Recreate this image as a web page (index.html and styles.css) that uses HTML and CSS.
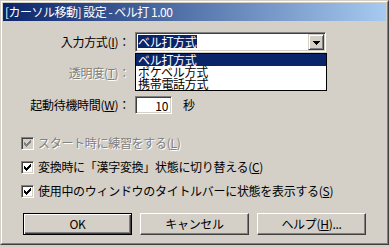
FILE: index.html
```html
<!DOCTYPE html>
<html lang="ja">
<head>
<meta charset="utf-8">
<title>設定</title>
<link rel="stylesheet" href="styles.css">
</head>
<body>
<div class="window">
  <div class="frame">
    <div class="titlebar">[カーソル移動] 設定 - ベル打 1.00</div>
    <div class="content">
      <div class="row row-method">
        <span class="label">入力方式(<u>I</u>)：</span>
        <div class="combo">
          <div class="combo-field"><span class="sel">ベル打方式</span></div>
          <div class="combo-btn">
            <svg width="7" height="4" viewBox="0 0 7 4" shape-rendering="crispEdges"><path d="M0 0h7v1h-7zM1 1h5v1h-5zM2 2h3v1h-3zM3 3h1v1h-1z" fill="#000"/></svg>
          </div>
          <ul class="dropdown">
            <li class="item active">ベル打方式</li>
            <li class="item">ポケベル方式</li>
            <li class="item">携帯電話方式</li>
          </ul>
        </div>
      </div>
      <div class="row row-alpha">
        <span class="label disabled">透明度(<u>T</u>)：</span>
      </div>
      <div class="row row-wait">
        <span class="label">起動待機時間(<u>W</u>)：</span>
        <div class="edit">10</div>
        <span class="unit">秒</span>
      </div>
      <div class="checks">
        <div class="check is-disabled">
          <span class="box"><svg width="7" height="7" viewBox="0 0 7 7" shape-rendering="crispEdges"><path d="M6 0h1v1h-1zM5 1h2v1h-2zM0 2h1v1h-1zM4 2h3v1h-3zM0 3h2v1h-2zM3 3h3v1h-3zM0 4h5v1h-5zM1 5h3v1h-3zM2 6h1v1h-1z"/></svg></span>
          <span class="check-text disabled">スタート時に練習をする(<u>L</u>)</span>
        </div>
        <div class="check">
          <span class="box"><svg width="7" height="7" viewBox="0 0 7 7" shape-rendering="crispEdges"><path d="M6 0h1v1h-1zM5 1h2v1h-2zM0 2h1v1h-1zM4 2h3v1h-3zM0 3h2v1h-2zM3 3h3v1h-3zM0 4h5v1h-5zM1 5h3v1h-3zM2 6h1v1h-1z"/></svg></span>
          <span class="check-text">変換時に「漢字変換」状態に切り替える(<u>C</u>)</span>
        </div>
        <div class="check">
          <span class="box"><svg width="7" height="7" viewBox="0 0 7 7" shape-rendering="crispEdges"><path d="M6 0h1v1h-1zM5 1h2v1h-2zM0 2h1v1h-1zM4 2h3v1h-3zM0 3h2v1h-2zM3 3h3v1h-3zM0 4h5v1h-5zM1 5h3v1h-3zM2 6h1v1h-1z"/></svg></span>
          <span class="check-text">使用中のウィンドウのタイトルバーに状態を表示する(<u>S</u>)</span>
        </div>
      </div>
      <div class="buttons">
        <button class="btn btn-default">OK</button>
        <button class="btn">キャンセル</button>
        <button class="btn">ヘルプ(<u>H</u>)...</button>
      </div>
    </div>
  </div>
</div>
</body>
</html>
```
FILE: styles.css
```css
* { box-sizing: border-box; }
html, body { margin: 0; padding: 0; background: #D4D0C8; }
body {
  font-family: "Noto Sans CJK JP", "Noto Sans CJK SC", sans-serif;
  font-size: 12px;
  line-height: 12px;
  color: #000;
  letter-spacing: -0.3px;
}
u { text-decoration: underline; text-underline-offset: 1px; }

.window {
  width: 389px;
  height: 245px;
  border: 1px solid;
  border-color: #D4D0C8 #404040 #404040 #D4D0C8;
}
.frame {
  height: 100%;
  border: 1px solid;
  border-color: #fff #808080 #808080 #fff;
  padding: 1px;
}
.titlebar {
  height: 18px;
  line-height: 18px;
  padding-left: 2px;
  color: #fff;
  letter-spacing: -0.5px;
  white-space: nowrap;
  background: linear-gradient(to right, #0A246A, #A6CAF0);
}
.content { display: flex; flex-direction: column; }

.row { display: flex; align-items: center; gap: 5px; }
.label { flex: none; width: 127px; text-align: right; white-space: nowrap; }
.disabled { color: #808080; text-shadow: 1px 1px 0 #fff; }

.row-method { margin-top: 11px; height: 20px; }
.row-alpha { margin-top: 11px; height: 20px; }
.row-wait { margin-top: 13px; height: 18px; }

.combo {
  position: relative;
  width: 191px;
  height: 20px;
  display: flex;
  border: 1px solid;
  border-color: #808080 #fff #fff #808080;
  box-shadow: inset 1px 1px 0 #404040, inset -1px -1px 0 #D4D0C8;
  background: #fff;
  padding: 1px;
}
.combo-field { flex: 1; padding: 1px 0 0 1px; }
.sel { display: inline-block; height: 13px; line-height: 13px; background: #0A246A; color: #fff; }
.combo-btn {
  width: 16px;
  height: 16px;
  display: flex;
  align-items: center;
  justify-content: center;
  background: #D4D0C8;
  border: 1px solid;
  border-color: #D4D0C8 #404040 #404040 #D4D0C8;
  box-shadow: inset 1px 1px 0 #fff, inset -1px -1px 0 #808080;
}
.combo-btn svg { display: block; margin-top: 1px; }

.dropdown {
  position: absolute;
  left: -1px;
  top: 20px;
  width: 192px;
  margin: 0;
  padding: 0;
  list-style: none;
  background: #fff;
  border: 1px solid #000;
  z-index: 2;
}
.item { height: 12px; line-height: 12px; padding-left: 2px; white-space: nowrap; }
.item.active { background: #0A246A; color: #fff; }

.edit {
  width: 37px;
  height: 18px;
  line-height: 14px;
  text-align: right;
  padding-right: 3px;
  background: #fff;
  border: 1px solid;
  border-color: #808080 #fff #fff #808080;
  box-shadow: inset 1px 1px 0 #404040, inset -1px -1px 0 #D4D0C8;
  padding-top: 2px;
}
.unit { margin-left: 6px; }

.checks { margin-top: 17px; display: flex; flex-direction: column; }
.check { height: 24px; display: flex; align-items: center; padding-left: 18px; gap: 4px; white-space: nowrap; }
.box {
  flex: none;
  width: 13px;
  height: 13px;
  display: flex;
  align-items: center;
  justify-content: center;
  background: #fff;
  border: 1px solid;
  border-color: #808080 #fff #fff #808080;
  box-shadow: inset 1px 1px 0 #404040, inset -1px -1px 0 #D4D0C8;
}
.box svg { display: block; fill: #000; }
.is-disabled .box { background: #D4D0C8; }
.is-disabled .box svg { fill: #808080; }

.buttons { margin-top: 10px; padding-left: 20px; display: flex; gap: 8px; }
.btn {
  width: 109px;
  height: 22px;
  padding: 0;
  font: inherit;
  letter-spacing: inherit;
  color: #000;
  background: #D4D0C8;
  border: 1px solid;
  border-color: #fff #404040 #404040 #fff;
  box-shadow: inset -1px -1px 0 #808080;
}
.btn-default {
  border-color: #000;
  box-shadow: inset 1px 1px 0 #fff, inset -1px -1px 0 #404040, inset -2px -2px 0 #808080;
}
```
